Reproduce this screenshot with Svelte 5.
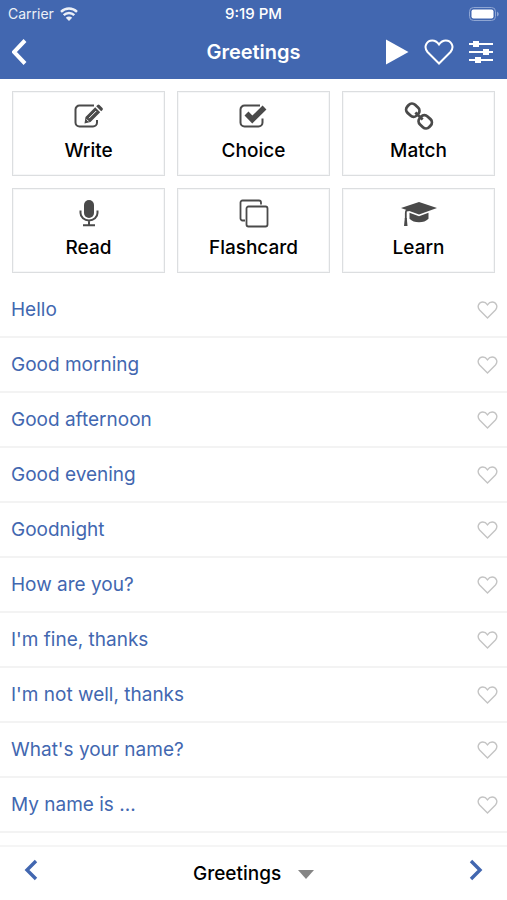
<script>
  const modes = ['Write', 'Choice', 'Match', 'Read', 'Flashcard', 'Learn'];
  const phrases = [
    'Hello',
    'Good morning',
    'Good afternoon',
    'Good evening',
    'Goodnight',
    'How are you?',
    "I'm fine, thanks",
    "I'm not well, thanks",
    "What's your name?",
    'My name is ...'
  ];
  let saved = $state({});
  let topic = $state('Greetings');
</script>

{#snippet modeIcon(name)}
  <svg class="mode-icon" viewBox="0 0 36 30" aria-hidden="true">
    {#if name === 'Write'}
      <path class="line" d="M23 4.5H8.500a4 4 0 0 0-4 4v13a4 4 0 0 0 4 4h13.500a4 4 0 0 0 4-4v-2.500" />
      <path class="solid" d="M13.500 22.500l1-6.500 9.700-9.700 5 5-9.700 9.700z M25.200 5.300l1.300-1.300q1-.9 2 0l3 3q.9 1 0 2l-1.300 1.300z" />
      <path class="cut" d="M18 17.200l7.200-7.200M15.600 18.400l2 2" />
    {:else if name === 'Choice'}
      <path class="line" d="M24 4.500H8.500a4 4 0 0 0-4 4v13a4 4 0 0 0 4 4h14a4 4 0 0 0 4-4v-4" />
      <path class="check" d="M10.500 12.500l5.800 6L28.500 6.500" />
    {:else if name === 'Match'}
      <g transform="rotate(43 18 15)">
        <rect class="link" x="3" y="9.500" width="13" height="11" rx="4.500" />
        <rect class="link" x="20" y="9.500" width="13" height="11" rx="4.500" />
        <path class="link" d="M13 15h10" />
      </g>
    {:else if name === 'Read'}
      <rect class="solid" x="13" y="2" width="10" height="18" rx="5" />
      <path class="line" d="M9.500 12.500v2.500a8.500 7.500 0 0 0 17 0v-2.500M18 22.500v4.500M12 27.200h12" />
    {:else if name === 'Flashcard'}
      <path class="line thin" d="M9 22.500H6.500a2 2 0 0 1-2-2V4.500a2 2 0 0 1 2-2H23a2 2 0 0 1 2 2V6.500" />
      <rect class="line thin" x="10.500" y="8.500" width="21" height="20" rx="2" />
    {:else}
      <path class="solid" d="M18 4L36 10 18 16.500 0 10z" />
      <path class="solid" d="M8.500 14.800l9.500 3.400 9.500-3.400v6q-3.500 3.500-9.500 3.500t-9.500-3.500z" />
      <path class="line thin" d="M18 10.500L5.500 12.500Q4.800 13 4.800 15v6" />
      <path class="solid" d="M3.800 20h2l.7 8H3z" />
    {/if}
  </svg>
{/snippet}

{#snippet heart()}
  <svg viewBox="0 0 30 26" aria-hidden="true">
    <path d="M15 24.500L3.500 13C-1 7.500 3 1.500 8.200 1.500c3 0 5.300 1.800 6.800 4 1.500-2.200 3.800-4 6.800-4C27 1.500 31 7.500 26.500 13z" />
  </svg>
{/snippet}

<div class="app">
  <header>
    <div class="status">
      <span class="carrier">
        Carrier
        <svg width="18" height="14" viewBox="0 0 18 14" aria-hidden="true">
          <path d="M1 4.800a11.500 11.500 0 0 1 16 0M3.700 8.200a7.500 7.500 0 0 1 10.600 0" />
          <path class="dot" d="M9 14L5.800 10.800a4.500 4.500 0 0 1 6.400 0z" />
        </svg>
      </span>
      <time>9:19 PM</time>
      <svg class="battery" width="30" height="14" viewBox="0 0 30 14" aria-hidden="true">
        <rect class="shell" x=".5" y=".5" width="26" height="13" rx="4" />
        <rect class="charge" x="2.500" y="2.500" width="22" height="9" rx="2" />
        <path class="shell-fill" d="M28 4.500q1.800 1 1.800 2.500T28 9.500z" />
      </svg>
    </div>
    <nav>
      <button class="back" aria-label="Back">
        <svg width="15" height="28" viewBox="3 0 15 28" aria-hidden="true"><path d="M16 2.500L5 14l11 11.500" /></svg>
      </button>
      <h1>Greetings</h1>
      <div class="actions">
        <button aria-label="Play">
          <svg width="24" height="26" viewBox="0 0 24 26" aria-hidden="true"><path class="white" d="M1 .5L23.500 13 1 25.500z" /></svg>
        </button>
        <button class="favourites" aria-label="Favourites">{@render heart()}</button>
        <button aria-label="Settings">
          <svg width="26" height="24" viewBox="1 0 26 24" aria-hidden="true">
            <path class="rail" d="M1 4h24M1 12h24M1 20h24" />
            <path class="white" d="M5 1h6v6H5zM15 9h6v6h-6zM7 17h6v6H7z" />
          </svg>
        </button>
      </div>
    </nav>
  </header>

  <main>
    <section class="modes" aria-label="Practice modes">
      {#each modes as mode}
        <button>
          {@render modeIcon(mode)}
          <span>{mode}</span>
        </button>
      {/each}
    </section>

    <ul>
      {#each phrases as phrase}
        <li>
          <a href="#phrase">{phrase}</a>
          <button
            class="save"
            aria-label={`Save ${phrase}`}
            aria-pressed={!!saved[phrase]}
            onclick={() => (saved[phrase] = !saved[phrase])}
          >{@render heart()}</button>
        </li>
      {/each}
    </ul>
  </main>

  <footer>
    <button aria-label="Previous topic">
      <svg width="16" height="22" viewBox="0 0 16 22" aria-hidden="true"><path d="M13 2L4 11l9 9" /></svg>
    </button>
    <div class="picker">
      <select aria-label="Topic" bind:value={topic}>
        <option>Greetings</option>
      </select>
      <svg width="16" height="9" viewBox="0 0 16 9" aria-hidden="true"><path d="M0 0h16L8 9z" /></svg>
    </div>
    <button aria-label="Next topic">
      <svg width="16" height="22" viewBox="0 0 16 22" aria-hidden="true"><path d="M3 2l9 9-9 9" /></svg>
    </button>
  </footer>
</div>

<style>
  :global(body) {
    margin: 0;
  }
  .app {
    display: flex;
    flex-direction: column;
    min-height: 100vh;
    background: #fff;
    color: #000;
    font-family: Inter, 'Liberation Sans', sans-serif;
  }
  svg {
    display: block;
    fill: none;
  }
  button {
    display: grid;
    place-items: center;
    margin: 0;
    padding: 0;
    border: 0;
    background: none;
    color: inherit;
    font: inherit;
    cursor: pointer;
  }
  header {
    background: #4267b0;
    color: #fff;
  }
  .status {
    display: grid;
    grid-template-columns: 1fr auto 1fr;
    align-items: center;
    height: 27px;
    padding: 0 8px;
    font-size: 14px;
    line-height: 27px;
  }
  .carrier {
    display: flex;
    align-items: center;
    gap: 6px;
    opacity: 0.9;
  }
  .carrier path {
    stroke: #fff;
    stroke-width: 2.4;
  }
  .carrier .dot,
  .white,
  .charge {
    fill: #fff;
    stroke: none;
  }
  time {
    font-size: 15px;
    font-weight: 500;
  }
  .battery {
    justify-self: end;
  }
  .shell {
    stroke: #8fa6d3;
  }
  .shell-fill {
    fill: #8fa6d3;
  }
  nav {
    display: grid;
    grid-template-columns: 1fr auto 1fr;
    align-items: center;
    height: 52px;
    padding: 0 12px 2px;
    box-sizing: border-box;
  }
  .back {
    justify-self: start;
  }
  .back path {
    stroke: #fff;
    stroke-width: 4;
  }
  h1 {
    margin: 0;
    font-size: 20px;
    line-height: 28px;
    font-weight: 600;
  }
  .actions {
    display: flex;
    justify-content: flex-end;
    align-items: center;
    gap: 15px;
  }
  .favourites svg {
    width: 30px;
    height: 26px;
    stroke: #fff;
    stroke-width: 2;
  }
  .rail {
    stroke: #fff;
    stroke-width: 2;
  }
  main {
    flex: 1;
  }
  .modes {
    display: grid;
    grid-template-columns: repeat(3, 1fr);
    gap: 12px;
    padding: 12px 12px 10px;
  }
  .modes button {
    align-content: start;
    gap: 6px;
    height: 85px;
    padding: 9px 0 0;
    border: 1px solid #dcdee0;
    box-shadow: inset 0 0 0 1px #f6f7f8;
    font-size: 19px;
    line-height: 28px;
    font-weight: 500;
  }
  .mode-icon {
    width: 36px;
    height: 30px;
  }
  .line,
  .link,
  .check {
    stroke: #4a4a4a;
    stroke-width: 2;
  }
  .thin {
    stroke-width: 1.8;
  }
  .link {
    stroke-width: 2.8;
  }
  .check {
    stroke-width: 5.5;
  }
  .solid {
    fill: #4a4a4a;
  }
  .cut {
    stroke: #fff;
    stroke-width: 1;
  }
  ul {
    margin: 0;
    padding: 0 0 12px;
    list-style: none;
  }
  li {
    display: flex;
    align-items: center;
    height: 55px;
    padding: 0 9px 0 11px;
    border-bottom: 2px solid #f3f3f3;
    box-sizing: border-box;
  }
  a {
    flex: 1;
    color: #4267b0;
    font-size: 19px;
    line-height: 28px;
    text-decoration: none;
  }
  .save svg {
    width: 21px;
    height: 18px;
    stroke: #c4c4c4;
    stroke-width: 2;
  }
  .save[aria-pressed='true'] svg {
    fill: #c4c4c4;
  }
  footer {
    position: sticky;
    bottom: 0;
    display: flex;
    justify-content: space-between;
    align-items: center;
    height: 56px;
    padding: 0 23px;
    border-top: 2px solid #f5f5f5;
    background: #fff;
    box-sizing: border-box;
  }
  footer button {
    padding-bottom: 8px;
  }
  footer button path {
    stroke: #4267b0;
    stroke-width: 3.4;
  }
  .picker {
    position: relative;
  }
  select {
    appearance: none;
    margin: 0;
    padding: 0 32px 0 0;
    border: 0;
    background: none;
    color: #000;
    font: 500 19px/28px Inter, 'Liberation Sans', sans-serif;
  }
  .picker svg {
    position: absolute;
    top: 10px;
    right: 0;
    fill: #858585;
    pointer-events: none;
  }
</style>
